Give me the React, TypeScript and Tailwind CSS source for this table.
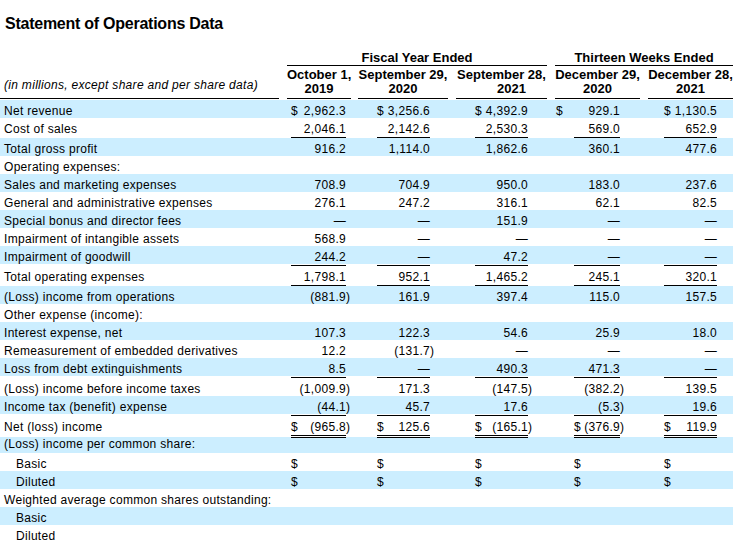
import React from 'react';

type Row = {
  label: string;
  vals?: string[];
  indent?: boolean;
  rule?: 'single' | 'double';
  dollar?: boolean;
  tight?: boolean;
};

// column tracks: label 0-287, then five value columns out to 733
const cols = [
  { cell: 'w-[65px]', box: 'ml-[4px] w-[55px]' },
  { cell: 'w-[100px]', box: 'ml-[25px] w-[53px]' },
  { cell: 'w-[99px]', box: 'ml-[23px] w-[53px]' },
  { cell: 'w-[93px]', box: 'ml-[23px] w-[46px]' },
  { cell: 'w-[89px]', box: 'ml-[20px] w-[53px]' },
];

const D = '—';

const rows: Row[] = [
  { label: 'Net revenue', vals: ['2,962.3', '3,256.6', '4,392.9', '929.1', '1,130.5'], dollar: true },
  { label: 'Cost of sales', vals: ['2,046.1', '2,142.6', '2,530.3', '569.0', '652.9'], rule: 'single' },
  { label: 'Total gross profit', vals: ['916.2', '1,114.0', '1,862.6', '360.1', '477.6'] },
  { label: 'Operating expenses:' },
  { label: 'Sales and marketing expenses', vals: ['708.9', '704.9', '950.0', '183.0', '237.6'] },
  { label: 'General and administrative expenses', vals: ['276.1', '247.2', '316.1', '62.1', '82.5'] },
  { label: 'Special bonus and director fees', vals: [D, D, '151.9', D, D] },
  { label: 'Impairment of intangible assets', vals: ['568.9', D, D, D, D] },
  { label: 'Impairment of goodwill', vals: ['244.2', D, '47.2', D, D], rule: 'single' },
  { label: 'Total operating expenses', vals: ['1,798.1', '952.1', '1,465.2', '245.1', '320.1'], rule: 'single' },
  { label: '(Loss) income from operations', vals: ['(881.9)', '161.9', '397.4', '115.0', '157.5'] },
  { label: 'Other expense (income):' },
  { label: 'Interest expense, net', vals: ['107.3', '122.3', '54.6', '25.9', '18.0'] },
  { label: 'Remeasurement of embedded derivatives', vals: ['12.2', '(131.7)', D, D, D] },
  { label: 'Loss from debt extinguishments', vals: ['8.5', D, '490.3', '471.3', D], rule: 'single' },
  { label: '(Loss) income before income taxes', vals: ['(1,009.9)', '171.3', '(147.5)', '(382.2)', '139.5'] },
  { label: 'Income tax (benefit) expense', vals: ['(44.1)', '45.7', '17.6', '(5.3)', '19.6'], rule: 'single' },
  { label: 'Net (loss) income', vals: ['(965.8)', '125.6', '(165.1)', '(376.9)', '119.9'], rule: 'double', dollar: true },
  { label: '(Loss) income per common share:', tight: true },
  { label: 'Basic', vals: ['', '', '', '', ''], indent: true, dollar: true },
  { label: 'Diluted', vals: ['', '', '', '', ''], indent: true, dollar: true },
  { label: 'Weighted average common shares outstanding:' },
  { label: 'Basic', indent: true },
  { label: 'Diluted', indent: true },
];

function Num({ v }: { v: string }) {
  if (v.endsWith(')')) {
    return (
      <span className="whitespace-nowrap">
        {v.slice(0, -1)}
        <span className="inline-block w-0">)</span>
      </span>
    );
  }
  return <span>{v}</span>;
}

function DataRow({ row, shaded }: { row: Row; shaded: boolean }) {
  const bg = shaded ? 'bg-[#cceeff]' : '';
  return (
    <div>
      <div className={`flex items-end ${row.tight ? 'h-[16px] pb-[2px]' : 'h-[18px]'} ${bg}`}>
        <div className={`w-[287px] ${row.indent ? 'pl-[16px]' : 'pl-[4px]'} whitespace-nowrap`}>{row.label}</div>
        {cols.map((c, i) => (
          <div key={i} className={c.cell}>
            {row.vals && (
              <div className={`${c.box} flex justify-between`}>
                <span className={row.label === 'Net revenue' && i === 3 ? '-ml-[18px]' : ''}>
                  {row.dollar ? '$' : ''}
                </span>
                <Num v={row.vals[i]} />
              </div>
            )}
          </div>
        ))}
      </div>
      {row.rule && (
        <div className={`flex pt-[1px] ${row.rule === 'double' ? 'relative z-10 -mb-[1px]' : ''}`}>
          <div className="w-[287px]" />
          {cols.map((c, i) => (
            <div key={i} className={c.cell}>
              <div
                className={`${c.box} ${
                  row.rule === 'double' ? 'border-b-[3px] border-double' : 'border-b'
                } border-black`}
              />
            </div>
          ))}
        </div>
      )}
    </div>
  );
}

const heads = [
  { box: 'w-[64px]', a: 'October 1,', b: '2019', bx: '' },
  { box: 'ml-[7px] w-[90px]', a: 'September 29,', b: '2020', bx: '' },
  { box: 'ml-[8px] w-[91px]', a: 'September 28,', b: '2021', bx: 'pl-[20px]' },
  { box: 'ml-[8px] w-[85px]', a: 'December 29,', b: '2020', bx: '' },
  { box: 'ml-[8px] w-[85px]', a: 'December 28,', b: '2021', bx: '' },
];

export default function App() {
  return (
    <div className="w-[747px] h-[549px] bg-white text-black font-['Liberation_Sans',Arial,sans-serif] overflow-hidden">
      <h1 className="pt-[15px] pl-[5px] text-[16px] leading-[18px] font-bold tracking-[-0.25px]">
        Statement of Operations Data
      </h1>

      <div className="mt-[17px] flex text-[13px] leading-[15px] font-bold">
        <div className="w-[287px]" />
        <div className="w-[260px] border-b border-black text-center">Fiscal Year Ended</div>
        <div className="w-[8px]" />
        <div className="w-[178px] border-b border-black text-center">Thirteen Weeks Ended</div>
      </div>

      <div className="flex">
        <div className="w-[279px] border-b border-black flex items-end pb-[6px] pl-[4px] italic text-[12px] leading-[14px] tracking-[0.3px] whitespace-nowrap">
          (in millions, except share and per share data)
        </div>
        <div className="w-[8px]" />
        {heads.map((h, i) => (
          <div key={i} className={`${h.box} border-b border-black pt-[2px] pb-[2px] text-center text-[13px] leading-[14px] font-bold whitespace-nowrap`}>
            <div>{h.a}</div>
            <div className={h.bx}>{h.b}</div>
          </div>
        ))}
      </div>

      <div className="mt-[1px] w-[733px] text-[12px] leading-[14px] tracking-[0.3px]">
        {rows.map((r, i) => (
          <DataRow key={i} row={r} shaded={i % 2 === 0} />
        ))}
      </div>
    </div>
  );
}
